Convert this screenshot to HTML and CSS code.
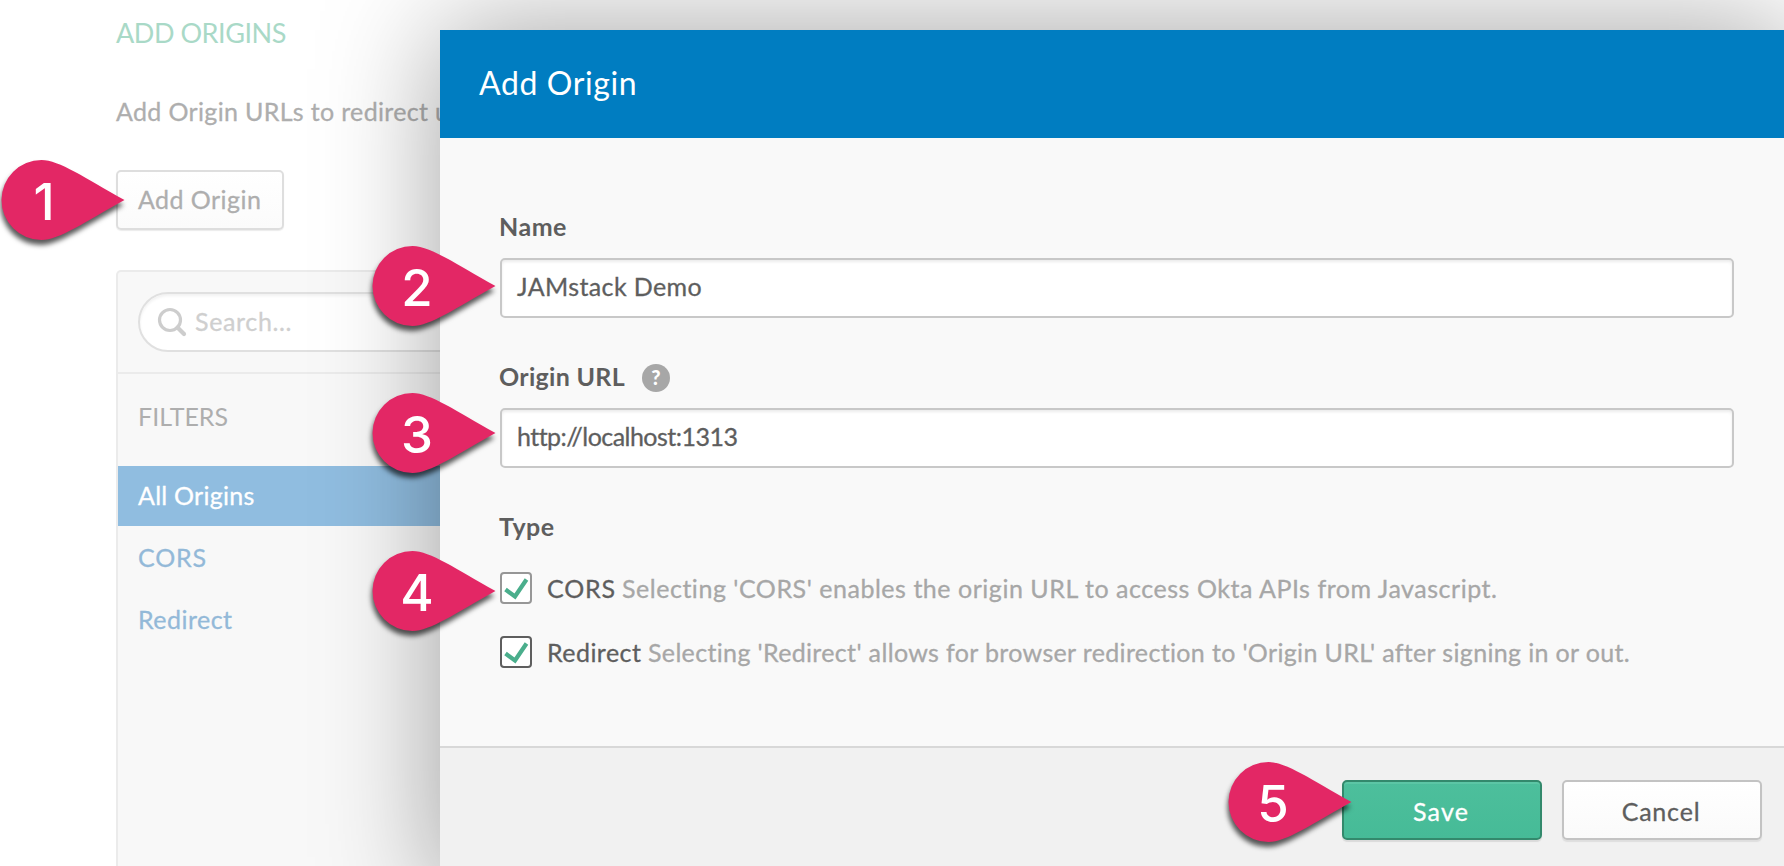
FILE: index.html
```html
<!DOCTYPE html>
<html lang="en">
<head>
<meta charset="utf-8">
<title>Add Origin</title>
<link rel="stylesheet" href="styles.css">
</head>
<body>
<svg class="defs" width="0" height="0" aria-hidden="true">
  <symbol id="pin" viewBox="0 0 124 80"><path d="M40.500 0C58 0 84 18 123.500 40C84 62 58 80 40.500 80A40 40 0 0 1 40.500 0Z" fill="#e32765"/></symbol>
  <symbol id="check" viewBox="0 0 28 28"><path d="M3.500 15.500L13 22.500L24.500 5.500" fill="none" stroke="#4aae8c" stroke-width="4.200"/></symbol>
</svg>

<main class="page">
  <h2 class="page-title">ADD ORIGINS</h2>
  <p class="intro">Add Origin URLs to redirect users</p>
  <div class="add-button">Add Origin</div>
  <section class="panel">
    <div class="panel-search">
      <div class="search">
        <svg class="search-icon" width="30" height="30" viewBox="0 0 30 30"><g fill="none" stroke="#cdcdcd"><circle cx="13" cy="13" r="10.500" stroke-width="3.200"/><path d="M20.500 20.500L27 27" stroke-width="4.200" stroke-linecap="round"/></g></svg>
        <span class="search-text">Search...</span>
      </div>
    </div>
    <h3 class="filters-title">FILTERS</h3>
    <ul class="filters">
      <li class="filter filter-active">All Origins</li>
      <li class="filter filter-cors">CORS</li>
      <li class="filter">Redirect</li>
    </ul>
  </section>
</main>

<div class="modal">
  <header class="modal-header">Add Origin</header>
  <div class="modal-body">
    <div class="label label-name">Name</div>
    <div class="field field-name">JAMstack Demo</div>
    <div class="label label-url">Origin URL <span class="help">?</span></div>
    <div class="field field-url">http://localhost:1313</div>
    <div class="label label-type">Type</div>
    <div class="option">
      <span class="box"><svg width="28" height="28"><use href="#check"/></svg></span>
      <span class="option-name name-cors">CORS</span>
      <span class="option-desc desc-cors">Selecting 'CORS' enables the origin URL to access Okta APIs from Javascript.</span>
    </div>
    <div class="option">
      <span class="box box-focus"><svg width="28" height="28"><use href="#check"/></svg></span>
      <span class="option-name name-redirect">Redirect</span>
      <span class="option-desc desc-redirect">Selecting 'Redirect' allows for browser redirection to 'Origin URL' after signing in or out.</span>
    </div>
  </div>
  <footer class="modal-footer">
    <div class="button button-save">Save</div>
    <div class="button button-cancel">Cancel</div>
  </footer>
</div>

<div class="pin pin-1"><svg width="124" height="80"><use href="#pin"/></svg><span class="pin-number">1</span></div>
<div class="pin pin-2"><svg width="124" height="80"><use href="#pin"/></svg><span class="pin-number">2</span></div>
<div class="pin pin-3"><svg width="124" height="80"><use href="#pin"/></svg><span class="pin-number">3</span></div>
<div class="pin pin-4"><svg width="124" height="80"><use href="#pin"/></svg><span class="pin-number">4</span></div>
<div class="pin pin-5"><svg width="124" height="80"><use href="#pin"/></svg><span class="pin-number">5</span></div>
</body>
</html>
```
FILE: styles.css
```css
* { box-sizing: border-box; }
html, body { margin: 0; height: 866px; overflow: hidden; }
body {
  position: relative;
  background: #fff;
  font: 400 25px/30px Lato, "Open Sans", sans-serif;
  font-kerning: normal;
  white-space: nowrap;
}
.defs { position: absolute; }
h2, h3, p, ul { margin: 0; padding: 0; list-style: none; font-weight: 400; }

/* page behind the dialog */
.page {
  display: flex;
  flex-direction: column;
  align-items: flex-start;
  height: 866px;
  padding: 17px 0 0 116px;
  color: #aeaeae;
  overflow: hidden;
}
.page-title {
  margin-bottom: 47px;
  font-size: 27px;
  line-height: 32px;
  letter-spacing: -0.45px;
  color: #a9d9c7;
}
.intro { margin-bottom: 44px; letter-spacing: 0.34px; -webkit-text-stroke: 0.3px; }
.add-button {
  width: 168px;
  height: 60px;
  margin-bottom: 40px;
  padding: 12px 20px;
  border: 2px solid #dedede;
  border-radius: 5px;
  background: linear-gradient(#fff, #fbfbfb);
  box-shadow: 0 1px 1px #ececec;
  letter-spacing: 0.45px;
  -webkit-text-stroke: 0.3px;
}
.panel {
  width: 700px;
  flex: 1;
  border: 2px solid #ebebeb;
  border-bottom: 0;
  border-radius: 5px 5px 0 0;
  background: #f8f8f8;
}
.panel-search { height: 102px; padding: 20px; border-bottom: 2px solid #ebebeb; }
.search {
  display: flex;
  gap: 8px;
  height: 60px;
  padding: 12px 17px;
  border: 2px solid #e0e0e0;
  border-radius: 30px;
  background: #fff;
  box-shadow: inset 0 2px 3px #f1f1f1;
  color: #cfcfcf;
}
.search-icon { margin-top: 1px; }
.search-text { letter-spacing: 0.65px; -webkit-text-stroke: 0.3px; }
.filters-title { margin: 27px 0 35px 20px; font-size: 25px; }
.filter {
  height: 60px;
  margin-bottom: 2px;
  padding: 14px 20px;
  color: #93b9d8;
  letter-spacing: 0.47px;
  -webkit-text-stroke: 0.3px;
}
.filter-active { background: #90bde0; color: #fff; letter-spacing: 0.25px; }
.filter-cors { letter-spacing: 0.8px; }

/* dialog */
.modal {
  position: absolute;
  left: 440px;
  top: 30px;
  display: flex;
  flex-direction: column;
  width: 1354px;
  height: 866px;
  background: #f9f9f9;
  box-shadow: 0 0 110px rgba(0, 0, 0, 0.37);
  color: #5e5e5e;
}
.modal-header {
  height: 108px;
  padding: 33px 39px;
  background: #007dc1;
  color: #fff;
  font-size: 32px;
  line-height: 39px;
  letter-spacing: 0.6px;
}
.modal-body { width: 1294px; height: 608px; padding: 73px 0 0 60px; }
.label { display: flex; height: 30px; margin: 0 0 17px -1px; font-weight: 700; }
.label-name { letter-spacing: 0.5px; }
.label-url { letter-spacing: 0.3px; }
.label-type { margin-bottom: 31px; letter-spacing: 0.5px; }
.help {
  width: 28px;
  height: 28px;
  margin: 3px 0 0 17px;
  border-radius: 50%;
  background: #a7a7a7;
  color: #fff;
  font-size: 20px;
  font-weight: 900;
  line-height: 27px;
  text-align: center;
}
.field {
  height: 60px;
  margin-bottom: 43px;
  padding: 11px 15px;
  border: 2px solid #c8c8c8;
  border-radius: 5px;
  background: #fff;
  box-shadow: inset 0 2px 3px #ececec;
  -webkit-text-stroke: 0.3px;
}
.field-name { letter-spacing: 0.38px; }
.field-url { letter-spacing: -0.53px; }
.option { display: flex; height: 32px; margin-bottom: 32px; line-height: 32px; -webkit-text-stroke: 0.3px; }
.box {
  width: 32px;
  height: 32px;
  margin-right: 15px;
  border: 2px solid #979797;
  border-radius: 4px;
  background: #fff;
}
.box svg { display: block; }
.box-focus { border-color: #5e5e5e; }
.option-name { margin-right: 7px; }
.name-cors { width: 68px; letter-spacing: 0.8px; }
.name-redirect { width: 94px; letter-spacing: 0.45px; }
.option-desc { color: #a7a7a7; }
.desc-cors { letter-spacing: 0.53px; }
.desc-redirect { letter-spacing: 0.345px; }
.modal-footer {
  display: flex;
  gap: 20px;
  flex: 1;
  justify-content: flex-end;
  padding: 32px 32px 0 0;
  border-top: 2px solid #d8d8d8;
  background: #f1f1f1;
}
.button {
  width: 200px;
  height: 60px;
  padding: 14px 2px 0 0;
  border: 2px solid #c3c3c3;
  border-radius: 5px;
  text-align: center;
  -webkit-text-stroke: 0.3px;
  box-shadow: 0 2px 1px #dedede;
}
.button-save {
  border-color: #33896c;
  background: linear-gradient(#4dbf9c, #46bb97);
  box-shadow: inset 0 2px 0 #5cc6a5, 0 2px 1px #dadada;
  color: #fff;
  letter-spacing: 1.2px;
}
.button-cancel { background: linear-gradient(#fff, #fafafa); letter-spacing: 0.8px; }

/* numbered callouts */
.pin { position: absolute; width: 124px; height: 80px; }
.pin svg { display: block; filter: drop-shadow(-1px 5px 2.5px rgba(0, 0, 0, 0.65)); overflow: visible; }
.pin-number {
  position: absolute;
  left: 25px;
  top: 12px;
  width: 40px;
  font: 500 51px/60px Inter, "Liberation Sans", sans-serif;
  color: #fff;
  text-align: center;
}
.pin-1 { left: 1px; top: 160px; }
.pin-1 .pin-number { left: 23px; }
.pin-2 { left: 372px; top: 246px; }
.pin-3 { left: 372px; top: 393px; }
.pin-4 { left: 372px; top: 551px; }
.pin-5 { left: 1228px; top: 762px; }
```
